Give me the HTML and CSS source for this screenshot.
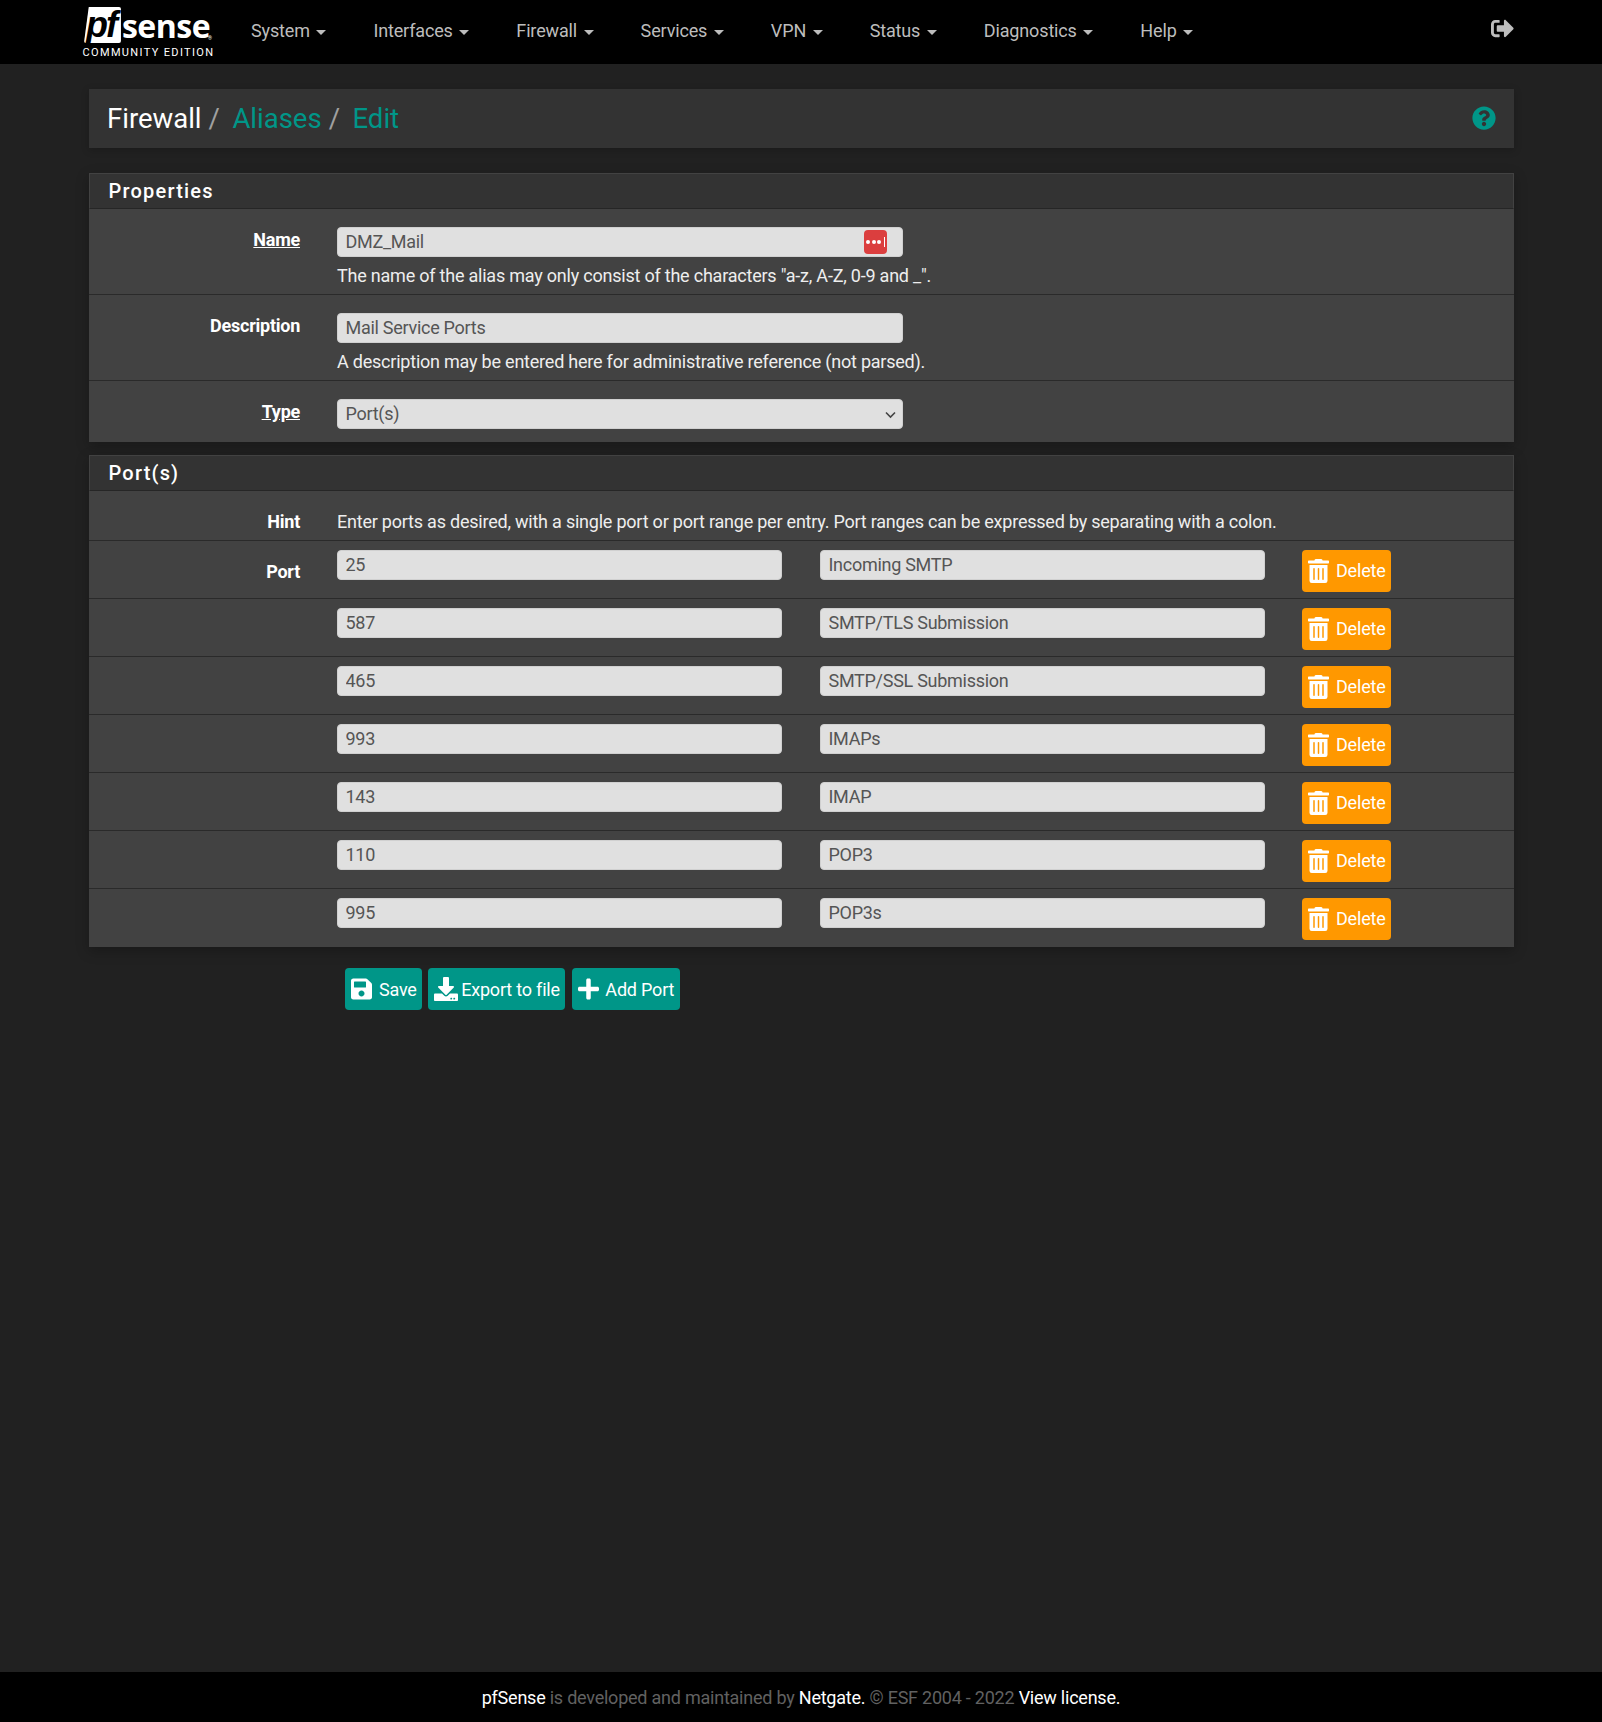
FILE: index.html
```html
<!DOCTYPE html>
<html lang="en">
<head>
    <meta charset="UTF-8">
    <title>Firewall / Aliases / Edit</title>
    <link rel="stylesheet" href="styles.css">
</head>
<body>

<nav class="navbar">
    <a class="logo" href="#">
        <span class="logo-top"><span class="logo-pf">pf</span><span class="logo-sense">sense</span><span class="logo-reg">&reg;</span></span>
        <span class="logo-sub">COMMUNITY EDITION</span>
    </a>
    <ul class="nav-menu">
        <li>System<span class="caret"></span></li>
        <li>Interfaces<span class="caret"></span></li>
        <li>Firewall<span class="caret"></span></li>
        <li>Services<span class="caret"></span></li>
        <li>VPN<span class="caret"></span></li>
        <li>Status<span class="caret"></span></li>
        <li>Diagnostics<span class="caret"></span></li>
        <li>Help<span class="caret"></span></li>
    </ul>
    <a class="logout" href="#">
        <svg viewBox="0 0 512 512"><path d="M497 273L329 441c-15 15-41 4.5-41-17v-96H152c-13.3 0-24-10.7-24-24v-96c0-13.3 10.7-24 24-24h136V88c0-21.4 25.9-32 41-17l168 168c9.3 9.4 9.3 24.6 0 34zM192 436v-40c0-6.6-5.4-12-12-12H96c-17.7 0-32-14.3-32-32V160c0-17.7 14.3-32 32-32h84c6.6 0 12-5.4 12-12V76c0-6.6-5.4-12-12-12H96c-53 0-96 43-96 96v192c0 53 43 96 96 96h84c6.6 0 12-5.4 12-12z"/></svg>
    </a>
</nav>

<main class="container">
    <div class="breadcrumb">
        <h1>
            <span class="crumb-first">Firewall</span><span class="crumb-sep">/</span><a href="#">Aliases</a><span class="crumb-sep">/</span><a href="#">Edit</a>
        </h1>
        <a class="help" href="#">
            <svg viewBox="0 0 512 512"><path d="M504 256c0 136.997-111.043 248-248 248S8 392.997 8 256C8 119.083 119.043 8 256 8s248 111.083 248 248zM262.655 90c-54.497 0-89.255 22.957-116.549 63.758-3.536 5.286-2.353 12.415 2.715 16.258l34.699 26.31c5.205 3.947 12.621 3.008 16.665-2.122 17.864-22.658 30.113-35.797 57.303-35.797 20.429 0 45.698 13.148 45.698 32.958 0 14.976-12.363 22.667-32.534 33.976C247.128 238.528 216 254.941 216 296v4c0 6.627 5.373 12 12 12h56c6.627 0 12-5.373 12-12v-1.333c0-28.462 83.186-29.647 83.186-106.667 0-58.002-60.165-102-116.531-102zM256 338c-25.365 0-46 20.635-46 46 0 25.364 20.635 46 46 46s46-20.636 46-46c0-25.365-20.635-46-46-46z"/></svg>
        </a>
    </div>

    <section class="panel panel-props">
        <h2>Properties</h2>
        <div class="row">
            <label class="row-label"><u>Name</u></label>
            <div class="row-field">
                <div class="input-wrap">
                    <input class="input" type="text" value="DMZ_Mail">
                    <span class="pw-badge"><i></i><i></i><i></i><b></b></span>
                </div>
                <p class="help-text">The name of the alias may only consist of the characters "a-z, A-Z, 0-9 and _".</p>
            </div>
        </div>
        <div class="row">
            <label class="row-label">Description</label>
            <div class="row-field">
                <input class="input" type="text" value="Mail Service Ports">
                <p class="help-text">A description may be entered here for administrative reference (not parsed).</p>
            </div>
        </div>
        <div class="row">
            <label class="row-label"><u>Type</u></label>
            <div class="row-field">
                <div class="input-wrap">
                    <select class="input">
                        <option>Port(s)</option>
                    </select>
                    <svg class="chevron" viewBox="0 0 12 8"><path d="M1.5 1.5L6 6l4.500-4.500"/></svg>
                </div>
            </div>
        </div>
    </section>

    <section class="panel">
        <h2>Port(s)</h2>
        <div class="row row-hint">
            <label class="row-label">Hint</label>
            <div class="hint-text">Enter ports as desired, with a single port or port range per entry. Port ranges can be expressed by separating with a colon.</div>
        </div>
        <div class="row row-port">
            <label class="row-label">Port</label>
            <input class="input" type="text" value="25">
            <input class="input" type="text" value="Incoming SMTP">
            <button class="btn btn-delete" type="button"><svg viewBox="0 0 448 512"><use href="#icon-trash"/></svg>Delete</button>
        </div>
        <div class="row row-port">
            <label class="row-label"></label>
            <input class="input" type="text" value="587">
            <input class="input" type="text" value="SMTP/TLS Submission">
            <button class="btn btn-delete" type="button"><svg viewBox="0 0 448 512"><use href="#icon-trash"/></svg>Delete</button>
        </div>
        <div class="row row-port">
            <label class="row-label"></label>
            <input class="input" type="text" value="465">
            <input class="input" type="text" value="SMTP/SSL Submission">
            <button class="btn btn-delete" type="button"><svg viewBox="0 0 448 512"><use href="#icon-trash"/></svg>Delete</button>
        </div>
        <div class="row row-port">
            <label class="row-label"></label>
            <input class="input" type="text" value="993">
            <input class="input" type="text" value="IMAPs">
            <button class="btn btn-delete" type="button"><svg viewBox="0 0 448 512"><use href="#icon-trash"/></svg>Delete</button>
        </div>
        <div class="row row-port">
            <label class="row-label"></label>
            <input class="input" type="text" value="143">
            <input class="input" type="text" value="IMAP">
            <button class="btn btn-delete" type="button"><svg viewBox="0 0 448 512"><use href="#icon-trash"/></svg>Delete</button>
        </div>
        <div class="row row-port">
            <label class="row-label"></label>
            <input class="input" type="text" value="110">
            <input class="input" type="text" value="POP3">
            <button class="btn btn-delete" type="button"><svg viewBox="0 0 448 512"><use href="#icon-trash"/></svg>Delete</button>
        </div>
        <div class="row row-port">
            <label class="row-label"></label>
            <input class="input" type="text" value="995">
            <input class="input" type="text" value="POP3s">
            <button class="btn btn-delete" type="button"><svg viewBox="0 0 448 512"><use href="#icon-trash"/></svg>Delete</button>
        </div>
    </section>

    <div class="button-group">
        <button class="btn btn-primary" type="button">
            <svg viewBox="0 0 448 512"><path d="M433.941 129.941l-83.882-83.882A48 48 0 0 0 316.118 32H48C21.49 32 0 53.49 0 80v352c0 26.51 21.49 48 48 48h352c26.51 0 48-21.49 48-48V163.882a48 48 0 0 0-14.059-33.941zM224 416c-35.346 0-64-28.654-64-64 0-35.346 28.654-64 64-64s64 28.654 64 64c0 35.346-28.654 64-64 64zm96-304.52V212c0 6.627-5.373 12-12 12H76c-6.627 0-12-5.373-12-12V108c0-6.627 5.373-12 12-12h228.52c3.183 0 6.235 1.264 8.485 3.515l3.48 3.48A11.996 11.996 0 0 1 320 111.48z"/></svg>Save
        </button>
        <button class="btn btn-primary" type="button">
            <svg class="icon-wide" viewBox="0 0 512 512"><path d="M216 0h80c13.3 0 24 10.7 24 24v168h87.7c17.8 0 26.7 21.5 14.1 34.1L269.7 378.3c-7.5 7.5-19.8 7.5-27.3 0L90.1 226.1c-12.6-12.6-3.7-34.1 14.1-34.1H192V24c0-13.3 10.7-24 24-24zm296 376v112c0 13.3-10.7 24-24 24H24c-13.3 0-24-10.7-24-24V376c0-13.3 10.7-24 24-24h146.7l49 49c20.1 20.1 52.5 20.1 72.6 0l49-49H488c13.3 0 24 10.7 24 24zm-124 88c0-11-9-20-20-20s-20 9-20 20 9 20 20 20 20-9 20-20zm64 0c0-11-9-20-20-20s-20 9-20 20 9 20 20 20 20-9 20-20z"/></svg>Export to file
        </button>
        <button class="btn btn-primary btn-add" type="button">
            <svg viewBox="0 0 448 512"><path d="M416 208H272V64c0-17.670-14.330-32-32-32h-32c-17.670 0-32 14.330-32 32v144H32c-17.670 0-32 14.330-32 32v32c0 17.670 14.330 32 32 32h144v144c0 17.670 14.330 32 32 32h32c17.670 0 32-14.330 32-32V304h144c17.670 0 32-14.330 32-32v-32c0-17.670-14.330-32-32-32z"/></svg>Add Port
        </button>
    </div>
</main>

<footer class="footer">
    <a href="#">pfSense</a> is developed and maintained by <a href="#">Netgate.</a> &copy; ESF 2004 - 2022 <a href="#">View license.</a>
</footer>

<svg class="defs" width="0" height="0">
    <symbol id="icon-trash" viewBox="0 0 448 512"><path d="M32 464a48 48 0 0 0 48 48h288a48 48 0 0 0 48-48V128H32zm272-256a16 16 0 0 1 32 0v224a16 16 0 0 1-32 0zm-96 0a16 16 0 0 1 32 0v224a16 16 0 0 1-32 0zm-96 0a16 16 0 0 1 32 0v224a16 16 0 0 1-32 0zM432 32H312l-9.400-18.700A24 24 0 0 0 281.100 0H166.800a23.720 23.720 0 0 0-21.400 13.300L136 32H16A16 16 0 0 0 0 48v32a16 16 0 0 0 16 16h416a16 16 0 0 0 16-16V48a16 16 0 0 0-16-16z"/></symbol>
</svg>

</body>
</html>
```

FILE: styles.css
```css
/* Page */
* {
    box-sizing: border-box;
}

body {
    margin: 0;
    min-height: 1722px;
    display: flex;
    flex-direction: column;
    background-color: #212121;
    color: #fff;
    font-family: Roboto, "Noto Sans", sans-serif;
    font-size: 18px;
    line-height: 1.42857;
}

a {
    color: #fff;
    text-decoration: none;
}

.defs {
    position: absolute;
}

/* Top bar */
.navbar {
    height: 64px;
    flex: none;
    display: flex;
    align-items: flex-start;
    padding-left: 82px;
    padding-right: 88px;
    background-color: #000;
}

.logo {
    width: 133px;
    padding-top: 7px;
    display: flex;
    flex-direction: column;
    align-items: center;
    color: #fff;
}

.logo-top {
    display: flex;
    align-items: flex-end;
    height: 36px;
    margin-left: -1px;
}

.logo-pf {
    width: 37px;
    height: 36px;
    padding-right: 3px;
    background-color: #fff;
    border-radius: 2px;
    clip-path: polygon(13% 0, 100% 0, 100% 100%, 0 100%);
    color: #000;
    font-family: "Liberation Sans", sans-serif;
    font-size: 36px;
    font-style: italic;
    font-weight: 700;
    line-height: 36px;
    text-align: center;
    letter-spacing: -2px;
}

.logo-sense {
    margin-left: 1px;
    font-family: "Open Sans", sans-serif;
    font-size: 32px;
    font-weight: 700;
    line-height: 34px;
    letter-spacing: -0.5px;
}

.logo-reg {
    width: 4px;
    margin-left: -2px;
    font-size: 5px;
    line-height: 9px;
}

.logo-sub {
    margin-top: 3px;
    font-size: 11px;
    line-height: 13px;
    letter-spacing: 1.35px;
    white-space: nowrap;
}

.nav-menu {
    list-style: none;
    display: flex;
    margin: 0;
    padding: 0 0 0 36px;
    gap: 47.1px;
}

.nav-menu li {
    height: 62px;
    display: flex;
    align-items: center;
    color: #bdbdbd;
    letter-spacing: -0.15px;
}

.caret {
    width: 0;
    height: 0;
    margin-left: 6.5px;
    margin-top: 2px;
    border-top: 5px solid #bdbdbd;
    border-left: 5px solid transparent;
    border-right: 5px solid transparent;
}

.logout {
    margin-left: auto;
    padding-top: 17px;
}

.logout svg {
    display: block;
    width: 23px;
    height: 23px;
    fill: #bdbdbd;
}

/* Breadcrumb */
.container {
    width: 1425px;
    margin-left: 89px;
    padding-top: 25px;
}

.breadcrumb {
    height: 59px;
    display: flex;
    align-items: center;
    justify-content: space-between;
    padding: 0 18px;
    background-color: #333;
    box-shadow: 0 2px 8px rgba(0, 0, 0, 0.2);
}

.breadcrumb h1 {
    margin: 0;
    font-size: 27.5px;
    font-weight: 400;
    line-height: 1.2;
}

.breadcrumb a {
    color: #009688;
}

.crumb-sep {
    margin: 0 12.5px 0 7px;
    color: #a0a0a0;
}

.help {
    margin-top: -1px;
}

.help svg {
    display: block;
    width: 24px;
    height: 24px;
    fill: #009688;
}

/* Panels */
.panel {
    background-color: #424242;
    box-shadow: 0 4px 12px rgba(0, 0, 0, 0.25);
    margin-bottom: 13px;
}

.panel-props {
    margin-top: 25px;
}

.panel h2 {
    height: 36px;
    margin: 0;
    padding: 0 18.5px;
    background-color: #333;
    border: 1px solid #424242;
    border-bottom: 1px solid #262626;
    font-size: 20px;
    font-weight: 500;
    line-height: 34px;
    letter-spacing: 1.2px;
}

.row {
    display: flex;
    align-items: flex-start;
    border-top: 1px solid #2a2a2a;
    padding: 18px 0 5.3px;
}

.panel h2 + .row {
    border-top: none;
}

.row-label {
    width: 211px;
    flex: none;
    margin-right: 37px;
    font-weight: 700;
    text-align: right;
    letter-spacing: -0.25px;
}

.row-field {
    width: 566px;
}

.row:last-child .row-field {
    margin-bottom: 8px;
}

.input-wrap {
    position: relative;
}

.input {
    display: block;
    width: 100%;
    height: 30px;
    padding: 0 7.5px 2px;
    border: 1px solid #d0d0d0;
    border-radius: 4px;
    background-color: #e0e0e0;
    color: #555;
    font-family: inherit;
    font-size: 18px;
    letter-spacing: -0.28px;
    outline: none;
    appearance: none;
}

.help-text {
    margin: 6px 0 0;
    color: #eee;
    letter-spacing: -0.22px;
    white-space: nowrap;
}

.pw-badge {
    position: absolute;
    top: 3px;
    right: 16px;
    width: 23px;
    height: 24px;
    display: flex;
    align-items: center;
    justify-content: center;
    gap: 1.5px;
    background-color: #db3e3e;
    border-radius: 4px;
}

.pw-badge i {
    width: 4px;
    height: 4px;
    border-radius: 50%;
    background-color: #fff;
}

.pw-badge b {
    width: 1px;
    height: 10px;
    margin-left: 1px;
    background-color: #fff;
}

.chevron {
    position: absolute;
    top: 12px;
    right: 6px;
    width: 13px;
    height: 8px;
    fill: none;
    stroke: #444;
    stroke-width: 1.6;
}

/* Port rows */
.row-hint {
    height: 49px;
    padding: 13px 0 0;
    align-items: center;
}

.hint-text {
    color: #eee;
    letter-spacing: -0.22px;
}

.row-port {
    height: 58px;
    padding: 9px 0 0;
}

.row-port:last-child {
    height: 59px;
}

.row-port .row-label {
    padding-top: 9px;
}

.row-port .input {
    width: 445px;
    flex: none;
    margin-right: 38px;
}

.row-port .btn {
    margin-left: -1px;
    padding-bottom: 2px;
}

.row-port .btn svg {
    margin-top: 2px;
}

/* Tombol */
.btn {
    height: 42px;
    display: inline-flex;
    align-items: center;
    padding: 0 5.5px 0 6px;
    border: none;
    border-radius: 4px;
    color: #fff;
    font-family: inherit;
    font-size: 18px;
    letter-spacing: -0.2px;
    cursor: pointer;
}

.btn svg {
    width: 21px;
    height: 24px;
    margin-right: 7px;
    fill: #fff;
}

.btn .icon-wide {
    width: 24px;
    margin-right: 3px;
}

.btn-delete {
    background-color: #ff9800;
}

.btn-primary {
    background-color: #009688;
}

.btn-add {
    margin-left: 1px;
}

.btn-add svg {
    margin-right: 6px;
}

.button-group {
    display: flex;
    gap: 6px;
    margin-top: 21px;
    padding-left: 256px;
}

/* Footer */
.footer {
    flex: none;
    height: 50px;
    margin-top: auto;
    padding-top: 13px;
    background-color: #000;
    color: #616161;
    text-align: center;
    letter-spacing: -0.23px;
}
```
